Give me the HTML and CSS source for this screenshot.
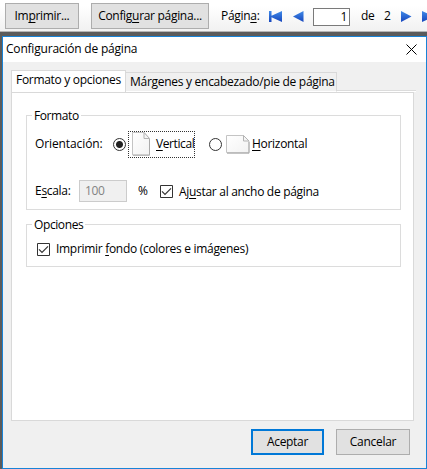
FILE: index.html
```html
<!DOCTYPE html>
<html lang="es">
<head>
<meta charset="utf-8">
<title>Configuración de página</title>
<link rel="stylesheet" href="styles.css">
</head>
<body>
<header class="toolbar">
  <button class="btn print"><span>Im<u>p</u>rimir...</span></button>
  <button class="btn setup"><span>Config<u>u</u>rar página...</span></button>
  <span class="page-label">Págin<u>a</u>:</span>
  <svg class="nav first" width="14" height="11" viewBox="0 0 14 11"><defs><linearGradient id="blue" x1="0" y1="0" x2="0" y2="1"><stop offset="0" stop-color="#3f8ae8"/><stop offset="1" stop-color="#1746bd"/></linearGradient></defs><path fill="url(#blue)" d="M0 0h2.5v4.7L13 0v11L2.5 6.3V11H0z"/></svg>
  <svg class="nav prev" width="11" height="11" viewBox="0 0 11 11"><path fill="url(#blue)" d="M10.5 0v11L0 5.5z"/></svg>
  <span class="page-input">1</span>
  <span class="of">de</span>
  <span class="total">2</span>
  <svg class="nav next" width="11" height="11" viewBox="0 0 11 11"><path fill="url(#blue)" d="M0 0v11l10.5-5.5z"/></svg>
  <svg class="nav last" width="14" height="11" viewBox="0 0 14 11"><path fill="url(#blue)" d="M0 0v11l10.5-4.7V11H13V0h-2.5v4.7z"/></svg>
</header>
<main class="dialog">
  <div class="titlebar">
    <span class="title">Configuración de página</span>
    <svg width="11" height="11" viewBox="0 0 11 11"><path d="M.5.5l10 10M10.5.5l-10 10" stroke="#000" stroke-width="1" fill="none"/></svg>
  </div>
  <div class="tabs">
    <div class="tab active"><span>Formato y opciones</span></div>
    <div class="tab idle"><span>Márgenes y encabezado/pie de página</span></div>
    <div class="tab-rest"></div>
  </div>
  <section class="panel">
    <fieldset class="format">
      <legend><span>Formato</span></legend>
      <div class="row orientation">
        <span class="label orient-label">Orientación:</span>
        <i class="radio on"></i>
        <label class="choice portrait">
          <svg width="18" height="24" viewBox="0 0 18 24"><defs><linearGradient id="paper" x1="0" y1="0" x2="1" y2="1"><stop offset="0" stop-color="#fff"/><stop offset="1" stop-color="#f2f2f2"/></linearGradient></defs><path d="M.5.5h11.5l5.500 6v16.500H.5z" fill="url(#paper)" stroke="#c4c4c4"/><path d="M1 23.200h16.500V7" fill="none" stroke="#aaa"/><path d="M12 .5v6h5.500z" fill="#f5f5f5" stroke="#b4b4b4"/></svg>
          <span><u>V</u>ertical</span>
        </label>
        <i class="radio off"></i>
        <label class="choice landscape">
          <svg width="24" height="19" viewBox="0 0 24 19"><path d="M.5.5H17.500l5.500 6v11H.5z" fill="url(#paper)" stroke="#c4c4c4"/><path d="M1 18.200h22V7" fill="none" stroke="#aaa"/><path d="M17.500.5v5.500H23z" fill="#f5f5f5" stroke="#b4b4b4"/></svg>
          <span><u>H</u>orizontal</span>
        </label>
      </div>
      <div class="row scale">
        <span class="label scale-label">E<u>s</u>cala:</span>
        <span class="scale-input">100</span>
        <span class="percent">%</span>
        <svg class="check" width="13" height="13" viewBox="0 0 13 13"><path d="M.5.5h12v12H.5z" fill="#fff" stroke="#333"/><path d="M2 6.300l3 3 6-6" fill="none" stroke="#333" stroke-width="1.200"/></svg>
        <span class="fit">Aj<u>u</u>star al ancho de página</span>
      </div>
    </fieldset>
    <fieldset class="options">
      <legend><span>Opciones</span></legend>
      <div class="row background">
        <svg class="check" width="13" height="13" viewBox="0 0 13 13"><path d="M.5.5h12v12H.5z" fill="#fff" stroke="#333"/><path d="M2 6.300l3 3 6-6" fill="none" stroke="#333" stroke-width="1.200"/></svg>
        <span class="bg-text">Imprimir <u>f</u>ondo (colores e imágenes)</span>
      </div>
    </fieldset>
  </section>
  <footer class="actions">
    <button class="btn accept"><span>Aceptar</span></button>
    <button class="btn cancel"><span>Cancelar</span></button>
  </footer>
</main>
</body>
</html>
```
FILE: styles.css
```css
* { box-sizing: border-box; }
body {
  margin: 0;
  width: 427px;
  height: 469px;
  overflow: hidden;
  background: #5b5b5b;
  color: #000;
  font: 12px/16px "Open Sans", "Noto Sans", sans-serif;
  letter-spacing: -0.3px;
  white-space: nowrap;
}
u { text-decoration: underline; text-underline-offset: 2px; text-decoration-thickness: 1px; text-decoration-skip-ink: none; }
svg { display: block; flex: none; }
.toolbar {
  display: flex;
  align-items: flex-start;
  height: 32px;
  padding: 3px 0 0 5px;
  overflow: hidden;
  background: linear-gradient(#fff 20%, #f1f1f1);
  border-bottom: 1px solid #b5b5b5;
}
.btn {
  flex: none;
  display: flex;
  align-items: center;
  justify-content: center;
  height: 26px;
  padding: 0;
  border: 1px solid #adadad;
  background: #e1e1e1;
  color: #000;
  font: inherit;
  letter-spacing: inherit;
}
.print { width: 74px; }
.setup { width: 118px; margin-left: 12px; }
.page-label { flex: none; width: 48px; margin: 5px 0 0 12px; }
.nav { margin-top: 8px; }
.first { width: 14px; }
.prev { margin-left: 10px; }
.page-input {
  flex: none;
  width: 37px;
  height: 18px;
  margin: 5px 0 0 9px;
  padding-right: 2px;
  border: 1px solid #7a7a7a;
  background: #fff;
  text-align: right;
  line-height: 16px;
}
.of { flex: none; width: 23px; margin: 5px 0 0 11px; }
.total { flex: none; width: 17px; margin-top: 5px; }
.last { margin-left: 10px; }
.dialog {
  height: 433px;
  margin: 4px 0 0 2px;
  border: 1px solid #1883d7;
  background: #f0f0f0;
}
.titlebar {
  display: flex;
  justify-content: space-between;
  height: 25px;
  padding: 4px 9px 0 3px;
  background: #fff;
}
.titlebar svg { margin-top: 3px; }
.title { letter-spacing: -0.2px; }
.tabs { display: flex; align-items: flex-end; height: 30px; padding-left: 8px; }
.tab { flex: none; border: 1px solid #d9d9d9; border-bottom: 0; }
.active { width: 115px; height: 22px; padding: 1px 0 0 4px; background: #fff; }
.idle { width: 211px; height: 20px; padding: 1px 0 0 4px; border-left: 0; border-bottom: 1px solid #fff; letter-spacing: -0.28px; }
.tab-rest { width: 79px; height: 2px; border-top: 1px solid #dcdcdc; background: #fff; }
.panel {
  width: 403px;
  height: 329px;
  margin-left: 8px;
  padding: 15px 12px 0 14px;
  border: 1px solid #d9d9d9;
  background: #fff;
}
fieldset { position: relative; width: 375px; margin: 0; padding: 0; border: 1px solid #dcdcdc; }
legend { position: absolute; top: -8px; left: 5px; height: 16px; padding: 0 2px 0 2px; background: #fff; letter-spacing: -0.4px; }
.format { height: 95px; margin-top: 7px; }
.options { height: 43px; margin-top: 14px; }
.row { display: flex; align-items: center; }
.orientation { padding: 14px 0 0 8px; height: 42px; }
.orient-label { flex: none; width: 78px; letter-spacing: -0.1px; }
.radio { flex: none; width: 13px; height: 13px; border: 1px solid #333; border-radius: 50%; background: #fff; }
.on { background: radial-gradient(circle, #222 0 3px, #fff 4px); }
.choice { flex: none; display: flex; align-items: center; }
.portrait { width: 67px; height: 27px; margin-left: 2px; padding-left: 3px; border: 1px dotted #333; }
.portrait span { margin-left: 6px; letter-spacing: -0.4px; }
.off { margin-left: 14px; }
.landscape { margin-left: 4px; }
.landscape span { margin-left: 2px; }
.scale { height: 22px; margin-top: 22px; padding-left: 8px; }
.scale-label { flex: none; width: 44px; }
.scale-input { flex: none; width: 48px; height: 22px; padding: 2px 0 0 5px; border: 1px solid #ccc; background: #f0f0f0; color: #838383; }
.percent { flex: none; width: 22px; margin-left: 11px; }
.fit { margin: 1px 0 0 6px; }
.background { padding: 16px 0 0 10px; }
.bg-text { margin-left: 6px; }
.actions { display: flex; padding: 8px 0 0 248px; }
.accept { width: 73px; border: 2px solid #0078d7; }
.cancel { width: 74px; margin-left: 12px; }
```
